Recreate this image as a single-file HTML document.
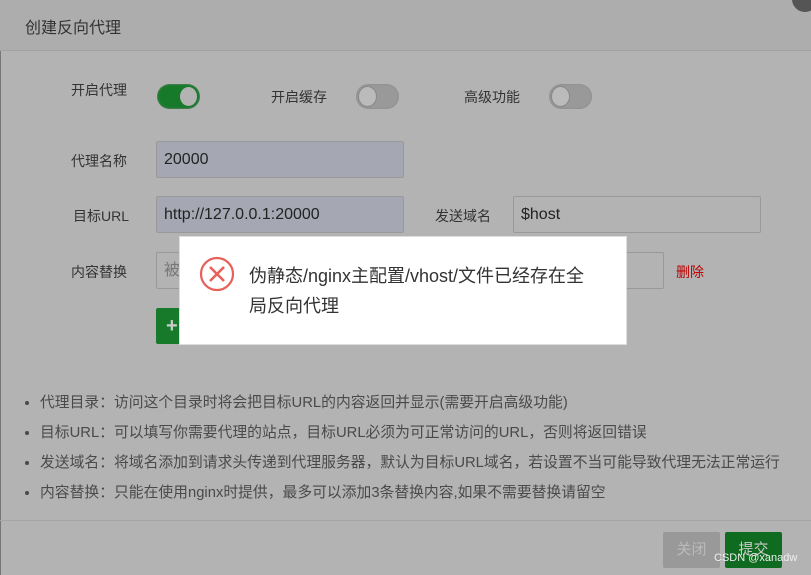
<!DOCTYPE html>
<html><head><meta charset="utf-8"><style>
body{margin:0;width:811px;height:575px;overflow:hidden;background:#b3b3b3;font-family:"Liberation Sans","Noto Sans CJK SC",sans-serif;color:#333;position:relative}
.a{position:absolute;white-space:nowrap}
.hd{position:absolute;left:0;top:0;width:811px;height:50px;background:#adadad;border-bottom:1px solid #a3a3a3}
.lbl{font-size:14px;color:#333}
.inp{position:absolute;box-sizing:border-box;border:1px solid #999;border-radius:2px;height:37px;font-size:16px;line-height:36px;padding-left:7px;color:#222}
.tg{position:absolute;width:43px;height:25px;border-radius:13px;background:#999;box-shadow:inset 0 0 2px #888}
.tg i{position:absolute;top:2px;left:2px;width:19px;height:21px;border-radius:50%;background:#bbb;border:1px solid #888;box-sizing:border-box}
.tg.on{background:#177a2b}.tg.on i{left:22px;background:#b3b3b3;border-color:#177a2b}
ul{position:absolute;left:0;top:388px;margin:0;padding:0 0 0 40px;font-size:14.8px;color:#4a4a4a;line-height:30px;list-style:disc}
</style></head><body>
<div style="position:absolute;left:0;top:0;width:1px;height:575px;background:#777"></div>
<div class="hd"></div>
<div class="a" style="left:25px;top:14px;font-size:16px;color:#333">创建反向代理</div>
<div style="position:absolute;left:792px;top:-14px;width:26px;height:26px;border-radius:50%;background:#555"></div>
<div class="a lbl" style="left:71px;top:80px">开启代理</div>
<div class="tg on" style="left:157px;top:84px"><i></i></div>
<div class="a lbl" style="left:271px;top:87px">开启缓存</div>
<div class="tg" style="left:356px;top:84px"><i></i></div>
<div class="a lbl" style="left:464px;top:87px">高级功能</div>
<div class="tg" style="left:549px;top:84px"><i></i></div>
<div class="a lbl" style="left:71px;top:151px">代理名称</div>
<div class="inp" style="left:156px;top:141px;width:248px;background:#a5a8b2">20000</div>
<div class="a lbl" style="left:73px;top:206px">目标URL</div>
<div class="inp" style="left:156px;top:196px;width:248px;background:#a5a8b2">http://127.0.0.1:20000</div>
<div class="a lbl" style="left:435px;top:206px">发送域名</div>
<div class="inp" style="left:513px;top:196px;width:248px">$host</div>
<div class="a lbl" style="left:71px;top:262px">内容替换</div>
<div class="inp" style="left:156px;top:252px;width:508px;color:#777">被</div>
<div class="a" style="left:676px;top:262px;font-size:14px;color:#b00">删除</div>
<div style="position:absolute;left:156px;top:308px;width:40px;height:36px;background:#177a2b;border-radius:2px;color:#ccc;font-size:20px;font-weight:bold;line-height:36px;padding-left:10px;box-sizing:border-box">+</div>
<ul><li>代理目录：访问这个目录时将会把目标URL的内容返回并显示(需要开启高级功能)</li><li>目标URL：可以填写你需要代理的站点，目标URL必须为可正常访问的URL，否则将返回错误</li><li>发送域名：将域名添加到请求头传递到代理服务器，默认为目标URL域名，若设置不当可能导致代理无法正常运行</li><li>内容替换：只能在使用nginx时提供，最多可以添加3条替换内容,如果不需要替换请留空</li></ul>
<div style="position:absolute;left:0;top:520px;width:811px;height:1px;background:#a6a6a6"></div>
<div class="a" style="left:663px;top:532px;width:57px;height:36px;background:#999;border-radius:2px;color:#bbb;font-size:15px;line-height:36px;text-align:center">关闭</div>
<div class="a" style="left:725px;top:532px;width:57px;height:36px;background:#0e6b1f;border-radius:2px;color:#ccc;font-size:15px;line-height:36px;text-align:center">提交</div>
<div class="a" style="left:714px;top:552px;font-size:11px;color:#eee">CSDN @xanadw</div>
<div style="position:absolute;left:179px;top:236px;width:448px;height:109px;background:#fff;border:1px solid #ddd;box-sizing:border-box"></div>
<svg style="position:absolute;left:199px;top:256px" width="36" height="36" viewBox="0 0 36 36"><circle cx="18" cy="18" r="16" fill="none" stroke="#e8605a" stroke-width="2.2"/><path d="M11 11L25 25M25 11L11 25" stroke="#e8605a" stroke-width="2.6"/></svg>
<div class="a" style="left:249px;top:261px;font-size:18px;line-height:30px;color:#333;white-space:normal;width:370px">伪静态/nginx主配置/vhost/文件已经存在全<br>局反向代理</div>
</body></html>
